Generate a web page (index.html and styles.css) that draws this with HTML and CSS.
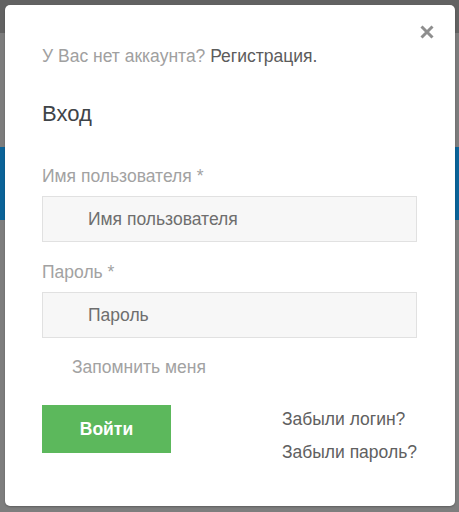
FILE: index.html
```html
<!DOCTYPE html>
<html lang="ru">
<head>
<meta charset="utf-8">
<title>Вход</title>
<link rel="stylesheet" href="styles.css">
</head>
<body>
<div class="modal">
  <button class="close" aria-label="Закрыть">
    <svg width="14" height="14" viewBox="0 0 14 14"><path d="M1.5 1.5L12.5 12.5M12.5 1.5L1.5 12.5" stroke="#8e8e8e" stroke-width="3" stroke-linecap="butt"/></svg>
  </button>
  <p class="signup">У Вас нет аккаунта? <a href="#" class="signup-link">Регистрация.</a></p>
  <h2 class="title">Вход</h2>
  <form class="form">
    <label class="label">Имя пользователя *</label>
    <div class="input"><span class="placeholder">Имя пользователя</span></div>
    <label class="label label-second">Пароль *</label>
    <div class="input"><span class="placeholder">Пароль</span></div>
    <div class="remember">Запомнить меня</div>
    <div class="actions">
      <button type="button" class="submit">Войти</button>
      <div class="links">
        <a href="#" class="link">Забыли логин?</a>
        <a href="#" class="link">Забыли пароль?</a>
      </div>
    </div>
  </form>
</div>
</body>
</html>
```
FILE: styles.css
```css
html, body {
  margin: 0;
  padding: 0;
}
body {
  width: 459px;
  height: 512px;
  overflow: hidden;
  font-family: "Liberation Sans", Arial, sans-serif;
  background:
    linear-gradient(to bottom, #626262 0 33px, #7c7c7c 33px 147px, #0b6398 147px 220px, #7e7e7e 220px 100%);
}
.modal {
  position: relative;
  box-sizing: border-box;
  margin: 5px;
  width: 450px;
  height: 501px;
  padding: 41px 38px 0 37px;
  background: #fff;
  border-radius: 5px;
  box-shadow: 0 1px 2px rgba(0, 0, 0, 0.25);
}
.close {
  position: absolute;
  left: 415px;
  top: 20px;
  width: 14px;
  height: 14px;
  padding: 0;
  border: 0;
  background: none;
  display: block;
}
.close svg { display: block; }
.signup {
  margin: 0;
  font-size: 17.5px;
  line-height: 20px;
  color: #a0a0a0;
}
.signup-link {
  color: #5c5c5c;
  text-decoration: none;
}
.title {
  margin: 35px 0 0;
  font-size: 22px;
  line-height: 26px;
  font-weight: normal;
  color: #3f4448;
}
.form {
  margin-top: 39px;
  display: flex;
  flex-direction: column;
}
.label {
  font-size: 17.5px;
  line-height: 20px;
  color: #a2a2a2;
  margin-bottom: 10px;
}
.label-second {
  margin-top: 20px;
}
.input {
  box-sizing: border-box;
  height: 46px;
  border: 1px solid #e1e1e1;
  background: #f7f7f7;
  display: flex;
  align-items: center;
  padding-left: 45px;
}
.placeholder {
  font-size: 17.5px;
  line-height: 20px;
  color: #6e6e6e;
}
.remember {
  margin-top: 19px;
  padding-left: 30px;
  font-size: 17.5px;
  line-height: 20px;
  color: #a2a2a2;
}
.actions {
  margin-top: 28px;
  display: flex;
  justify-content: space-between;
  align-items: flex-start;
}
.submit {
  width: 129px;
  height: 48px;
  border: 0;
  padding: 0;
  background: #5cb85c;
  color: #fff;
  font-family: "Liberation Sans", Arial, sans-serif;
  font-size: 17.5px;
  font-weight: bold;
}
.links {
  margin-top: -2px;
  display: flex;
  flex-direction: column;
  align-items: flex-start;
}
.link {
  font-size: 17.5px;
  line-height: 33px;
  color: #606060;
  text-decoration: none;
}
```
